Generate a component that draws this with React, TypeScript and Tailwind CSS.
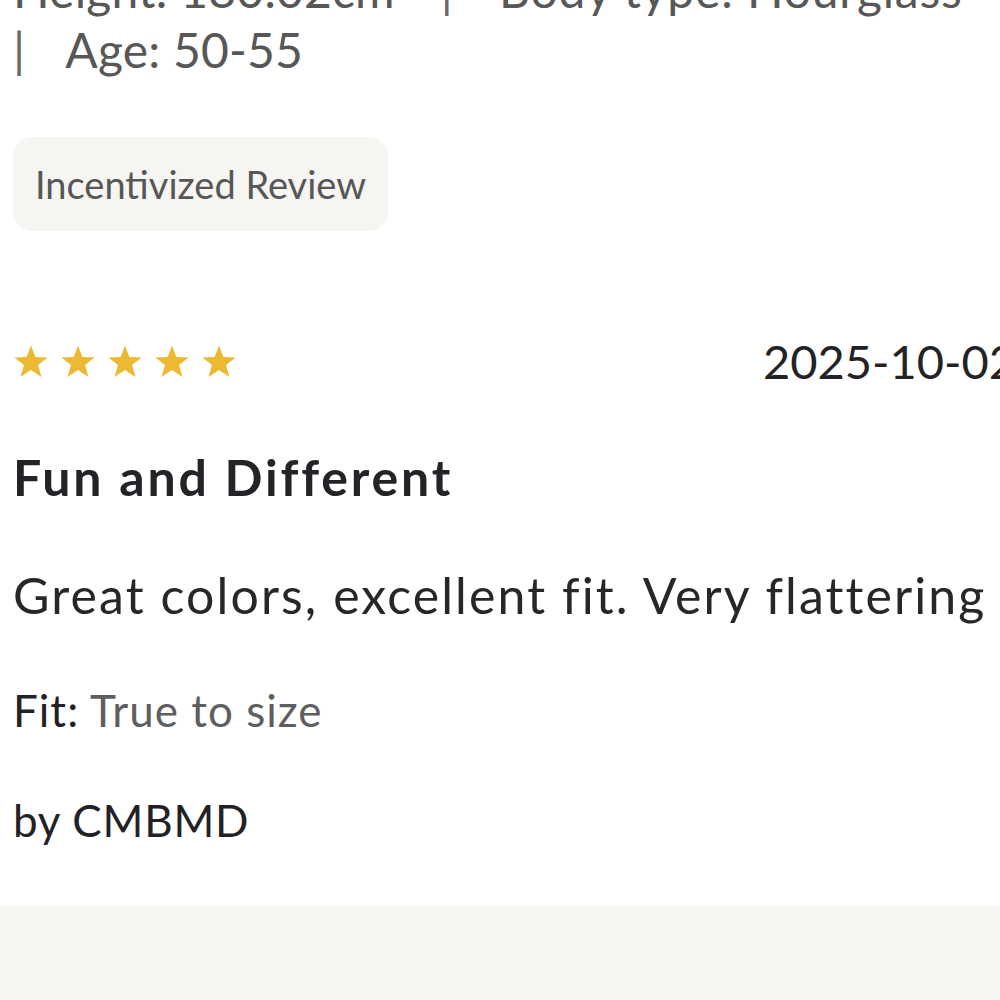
import React from "react";

const Star = () => (
  <svg width="36" height="36" viewBox="0 0 24 24" className="block">
    <path
      d="M12 1.6l2.9 7.7 8.2.3-6.4 5.1 2.3 7.9L12 18l-7 4.6 2.3-7.9L.9 9.6l8.2-.3z"
      fill="#EBB932"
    />
  </svg>
);

export default function App() {
  const font = { fontFamily: "Lato, 'Open Sans', sans-serif" };
  return (
    <div className="w-[1000px] h-[1000px] overflow-hidden bg-white" style={font}>
      <div className="px-[13px]">
        <div className="mt-[-40px] text-[48px] leading-[60px] tracking-[0.2px] text-[#575757] whitespace-nowrap">
          <span>Height: 180.02cm</span>
          <span className="mx-[46px] text-[#6a6a6a]">|</span>
          <span className="tracking-[0.8px]">Body type: Hourglass</span>
          <br />
          <span className="text-[#6a6a6a]">|</span>
          <span className="ml-[40px]">Age: 50-55</span>
        </div>
        <div className="mt-[57px] inline-flex h-[94px] items-center rounded-[20px] bg-[#f6f5f2] px-[22px] text-[38px] text-[#575757]">
          Incentivized Review
        </div>
        <div className="mt-[109px] flex items-center h-[42px]">
          <div className="flex gap-[11px]">
            <Star />
            <Star />
            <Star />
            <Star />
            <Star />
          </div>
          <div className="ml-[526px] text-[47px] text-[#232326] whitespace-nowrap">2025-10-02</div>
        </div>
        <div className="mt-[65px] text-[50px] font-bold leading-[60px] tracking-[2.8px] text-[#232328]">
          Fun and Different
        </div>
        <div className="mt-[58px] text-[50px] leading-[60px] tracking-[2.1px] text-[#27272a] whitespace-nowrap">
          Great colors, excellent fit. Very flattering
        </div>
        <div className="mt-[57px] text-[44px] leading-[56px] tracking-[1px]">
          <span className="text-[#222226]">Fit:</span>{" "}
          <span className="text-[#5e5e60]">True to size</span>
        </div>
        <div className="mt-[54px] text-[44px] leading-[56px] tracking-[0.8px] text-[#222226]">by CMBMD</div>
      </div>
      <div className="mt-[58px] h-[200px] bg-[#f6f5f1]" />
    </div>
  );
}
